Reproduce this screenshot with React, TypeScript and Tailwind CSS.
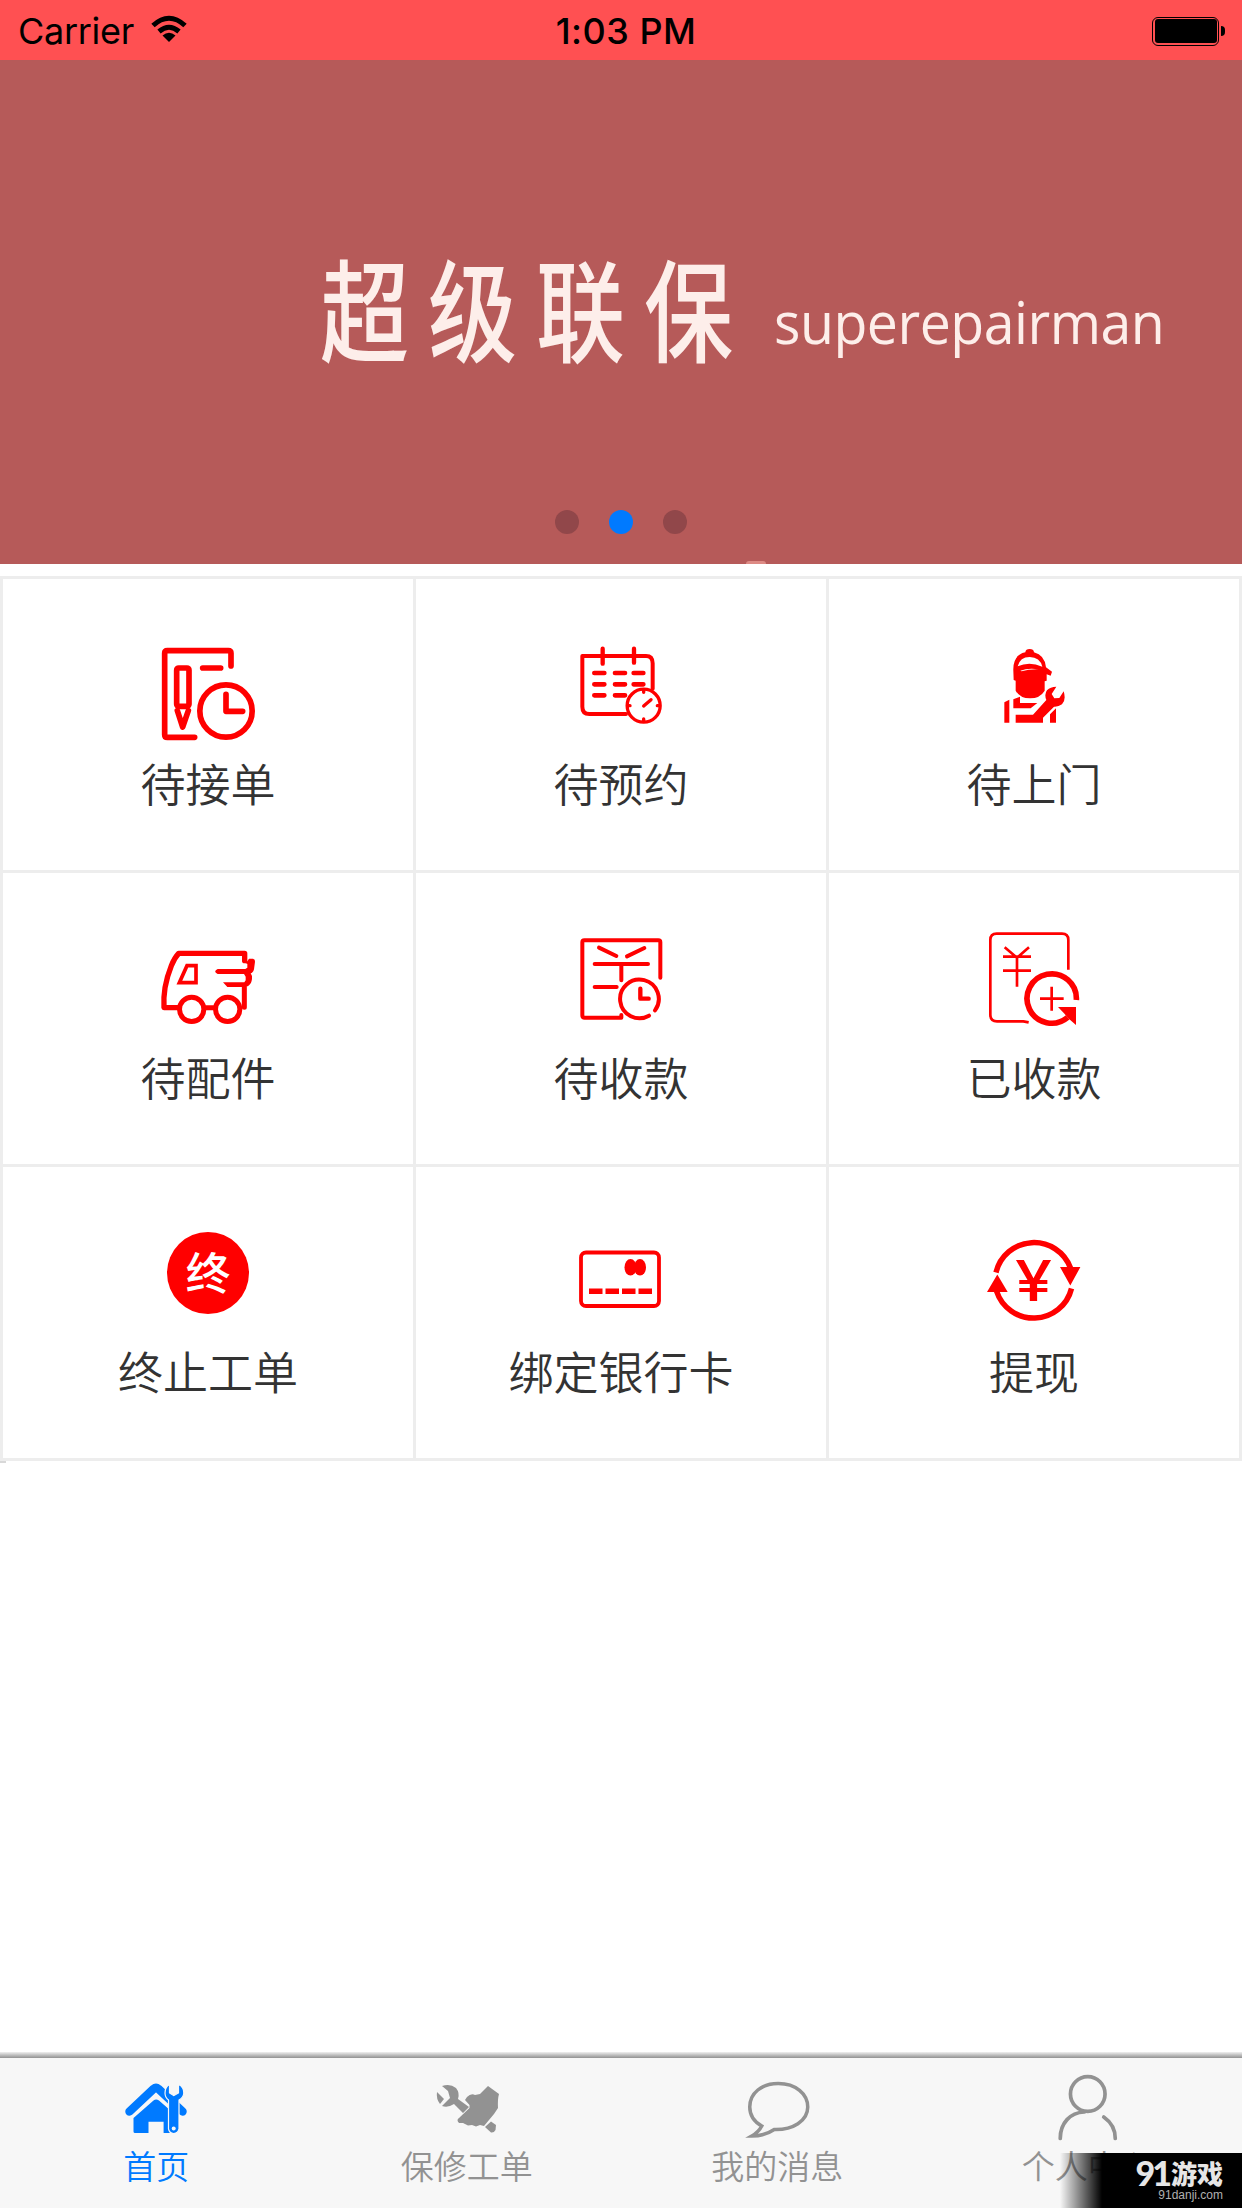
import type { ReactNode } from 'react'

const cjk = "font-['Noto_Sans_CJK_SC',sans-serif]"

function Icon({ box, children }: { box: string; children: ReactNode }) {
  return (
    <svg
      className="h-[130px] w-[160px]"
      viewBox={box}
      fill="none"
      stroke="#ff0000"
      strokeLinecap="round"
      strokeLinejoin="round"
    >
      {children}
    </svg>
  )
}

const OrderIcon = () => (
  <Icon box="-6 0 480 390">
    <g strokeWidth="17">
      <path d="M303 138V100q0-8-8-8H112q-8 0-8 8V344q0 8 8 8H194" />
      <rect x="140" y="144" width="37" height="115" rx="6" />
      <path d="M142 272L158 321L175 272M218 144H272" />
      <circle cx="288" cy="273" r="78.5" />
      <path d="M288 223V274H338" />
    </g>
  </Icon>
)

const BookingIcon = () => (
  <Icon box="-27 0 480 390">
    <g strokeWidth="12">
      <path d="M228 282H118Q97 282 97 260V108H288Q308 108 308 130V206" />
      <path d="M158 86V131M252 86V128" strokeWidth="13" />
      <path
        d="M133 159H163M195 159H225M251 159H280M133 193H163M195 193H225M251 193H280M133 226H163M195 226H225"
        strokeWidth="14"
      />
      <circle cx="281" cy="257" r="49.5" strokeWidth="10" />
      <path d="M281 258L303 239M281 212V217M281 297V302M236 257H240M322 257H326" strokeWidth="10" />
    </g>
  </Icon>
)

const WorkerIcon = () => (
  <Icon box="-18 0 480 390">
    <g fill="#ff0000" stroke="none">
      <path d="M160 152Q158 105 196 97Q197 87 209 87Q221 87 222 97Q254 105 258 142L276 155L272 167L260 163V182L254 184V212Q240 235 210 235Q180 235 167 212V182L161 180Z" />
      <path d="M133 247L148 239V308H133ZM160 238L180 230V249H232L212 265H160ZM167 284H219L259 240Q252 222 261 211Q271 200 289 200L275 222L283 235L298 234L311 214Q319 240 306 253Q295 261 282 260L249 293V308H167ZM270 283L288 265V308H270Z" />
      <path d="M173 139Q180 111 209 111Q240 112 247 140Q208 123 173 139ZM181 152Q205 143 236 148Q207 147 185 154Z" fill="#fff" />
    </g>
  </Icon>
)

const VanIcon = () => (
  <Icon box="-6 12 480 390">
    <path d="M143 293H102Q98 232 124 167Q133 144 146 130H344V152" strokeWidth="16" />
    <path d="M228 293H250M343 232V292" strokeWidth="15" />
    <path d="M171 167H198V218H148Z" strokeWidth="11" strokeLinejoin="miter" />
    <circle cx="185" cy="298" r="36.5" strokeWidth="15" />
    <circle cx="293" cy="298" r="36.5" strokeWidth="15" />
    <path
      d="M336 154H352L357 146H369Q376 148 375 155L372 178Q369 189 362 190L366 198Q367 214 360 223Q356 230 346 231H292L279 217H343L347 211V200L342 192H263Q248 184 263 177H346L352 173V162Z"
      fill="#ff0000"
      stroke="none"
    />
  </Icon>
)

const ReceivableIcon = () => (
  <Icon box="-27 12 480 390">
    <g strokeWidth="12">
      <path d="M331 203V97Q331 91 325 91H103Q97 91 97 97V316Q97 323 104 323H214V315" />
      <path d="M147 113L199 138M231 139L283 114M134 162H294M214 163V211M134 231H200" />
      <path d="M315 301A58 58 0 1 0 297 317" />
      <path d="M271 236V266H296" strokeWidth="13" />
    </g>
  </Icon>
)

const ReceivedIcon = () => (
  <Icon box="-18 12 480 390">
    <path
      d="M325 179V90Q325 71 306 71H110Q91 71 91 90V314Q91 334 111 334H190L206 337"
      strokeWidth="8"
      strokeLinecap="butt"
    />
    <path
      d="M134 112L171 143L207 112M129 140H213M129 182H213M171 142V230M275 230V302M240 266H311"
      strokeWidth="8"
      strokeLinecap="butt"
      strokeLinejoin="miter"
    />
    <path d="M349 270A74 74 0 1 0 323 322" strokeWidth="17" strokeLinecap="butt" />
    <path d="M294 291H348V345L328 328L312 310Z" fill="#ff0000" stroke="none" />
  </Icon>
)

const StopIcon = () => (
  <Icon box="54 -6 480 390">
    <circle cx="294" cy="189" r="123" fill="#ff0000" stroke="none" />
    <text
      x="294"
      y="240"
      fontSize="134"
      textAnchor="middle"
      fill="#fff"
      stroke="none"
      className={`${cjk} font-medium`}
    >
      终
    </text>
  </Icon>
)

const CardIcon = () => (
  <Icon box="541 1208 160 130">
    <rect x="581" y="1252.5" width="78" height="53.5" rx="5" strokeWidth="3.8" />
    <g fill="#ff0000" stroke="none">
      <ellipse cx="630.5" cy="1267.3" rx="6" ry="8.3" />
      <ellipse cx="640" cy="1267.3" rx="6" ry="8.3" />
      <path d="M589 1288.5h13.5v5.5H589zM605.5 1288.5h13.5v5.5h-13.5zM622 1288.5h13.5v5.5H622zM638.5 1288.5h13.5v5.5h-13.5z" />
    </g>
  </Icon>
)

const WithdrawIcon = () => (
  <Icon box="954 1208 160 130">
    <path
      d="M996 1272.5A39 39 0 0 1 1070.5 1268M1071.5 1288.5A39 39 0 0 1 996.5 1291"
      strokeWidth="5.5"
      strokeLinecap="butt"
    />
    <path d="M1060 1267H1080.4L1070.3 1285.5ZM987 1292H1007.7L997.3 1274.5Z" fill="#ff0000" stroke="none" />
    <text
      x="1033.5"
      y="1301"
      fontSize="56"
      textAnchor="middle"
      textLength="37"
      lengthAdjust="spacingAndGlyphs"
      fill="#ff0000"
      stroke="none"
      className="font-['Inter',sans-serif] font-medium"
    >
      ¥
    </text>
  </Icon>
)

const entries = [
  { label: '待接单', icon: <OrderIcon /> },
  { label: '待预约', icon: <BookingIcon /> },
  { label: '待上门', icon: <WorkerIcon /> },
  { label: '待配件', icon: <VanIcon /> },
  { label: '待收款', icon: <ReceivableIcon /> },
  { label: '已收款', icon: <ReceivedIcon /> },
  { label: '终止工单', icon: <StopIcon /> },
  { label: '绑定银行卡', icon: <CardIcon /> },
  { label: '提现', icon: <WithdrawIcon /> },
]

const tabs = [
  {
    label: '首页',
    active: true,
    icon: (
      <svg className="h-[72px] w-[70px]" viewBox="-5 -10 70 72" fill="#007aff">
        <path
          d="M4.5 31.5L28.5 9Q31 7 33.5 9L57.5 31.5"
          fill="none"
          stroke="#007aff"
          strokeWidth="8.5"
          strokeLinecap="round"
        />
        <path d="M8.5 38L28.5 20.5Q31 18.5 34 20.5L46 31V53H38.6V41.7H23.5V53H10Q8.5 53 8.5 51.5Z" />
        <path
          d="M44.5 4.5V13L48.8 15.5L53.5 13V4.5Q59 7 58.8 13Q58.5 17.5 54 20V49Q53 53.5 48.7 53.5Q44.5 53.5 43.5 49V20Q40 17.5 40 13Q40 7 44.5 4.5Z"
          stroke="#f7f7f7"
          strokeWidth="1.2"
        />
        <circle cx="48.7" cy="48.5" r="2" fill="#f7f7f7" />
      </svg>
    ),
  },
  {
    label: '保修工单',
    active: false,
    icon: (
      <svg className="h-[72px] w-[70px]" viewBox="431 2070 70 72" fill="#929292">
        <path d="M442 2086Q450 2083 456 2088Q460 2093 458 2099L469 2107L463 2113L454 2104Q448 2108 442 2106L450 2098L448 2091Z" />
        <path d="M437 2092L444 2099L440 2104Q436 2099 437 2092Z" />
        <path d="M488 2086L499 2094Q497.5 2099 498 2108L494 2114L484 2126L480 2125L476 2126.5L472 2125L468 2125.5L463 2123H459Q456 2120 459 2118L469.5 2108V2105L465 2100L467 2097Q471 2093 475 2095L480 2094Z" />
        <path d="M491 2121.5L496 2125L495.5 2130Q494 2133 491 2132.5L485 2127Z" />
      </svg>
    ),
  },
  {
    label: '我的消息',
    active: false,
    icon: (
      <svg
        className="h-[72px] w-[70px]"
        viewBox="741.25 2070 70 72"
        fill="none"
        stroke="#929292"
        strokeWidth="3.5"
      >
        <path d="M762 2126C753 2121 750 2114 750 2107C750 2093 762 2083.5 778.5 2083.5C796 2083.5 808 2094 808 2107C808 2121 793 2130 774.5 2129.5Q765 2136 752 2136Q759 2132 762 2126Z" />
      </svg>
    ),
  },
  {
    label: '个人中心',
    active: false,
    icon: (
      <svg
        className="h-[72px] w-[70px]"
        viewBox="1051.75 2070 70 72"
        fill="none"
        stroke="#929292"
        strokeWidth="3.7"
        strokeLinecap="round"
      >
        <circle cx="1087.5" cy="2094" r="17.3" />
        <path d="M1060 2138.5C1060 2123 1070 2112.5 1084 2112M1103.5 2117Q1115 2125 1115 2138.5" />
      </svg>
    ),
  },
]

function StatusBar() {
  return (
    <div className="grid h-[60px] grid-cols-3 items-center bg-[#ff5052] pt-[3px] pr-[17px] pb-px pl-[18px] font-['Inter',sans-serif] text-[36px] leading-none text-black">
      <div className="flex items-center gap-4">
        <span className="tracking-[-0.3px]">Carrier</span>
        <svg className="h-7 w-[38px] -translate-y-0.5" viewBox="0 0 38 28">
          <path d="M3 10.5Q19-4 35 10.5" fill="none" stroke="#000" strokeWidth="5" />
          <path d="M9 16.5Q19 8 29 16.5" fill="none" stroke="#000" strokeWidth="5" />
          <path d="M12.5 20.5Q19 15 25.5 20.5L19 27Z" />
        </svg>
      </div>
      <div className="pl-[9px] text-center font-medium tracking-[0.5px]">1:03 PM</div>
      <div className="flex items-center justify-end gap-0.5">
        <div className="h-[29px] w-[67px] rounded-[6px] border-[1.5px] border-black p-[1.5px]">
          <div className="h-full w-full rounded-[3px] bg-black" />
        </div>
        <div className="h-2.5 w-1 rounded-r-full bg-black" />
      </div>
    </div>
  )
}

function Banner() {
  return (
    <div className="relative h-[504px] overflow-hidden bg-[#b65a59]">
      <div className="flex items-start pt-[178px] pl-[320px] text-[#fdeeea]">
        <div
          className={`${cjk} w-[454px] scale-y-125 text-[89px] leading-[136px] font-medium tracking-[19px] whitespace-nowrap`}
        >
          超级联保
        </div>
        <div className="origin-left scale-x-[0.99] scale-y-105 pt-[52px] font-['Open_Sans',sans-serif] text-[56px] leading-[60px] font-medium tracking-[-0.5px] whitespace-nowrap">
          superepairman
        </div>
      </div>
      <div className="absolute bottom-[30px] left-1/2 flex -translate-x-1/2 gap-[30px]">
        <span className="size-6 rounded-full bg-[#91474a]" />
        <span className="size-6 rounded-full bg-[#007aff]" />
        <span className="size-6 rounded-full bg-[#91474a]" />
      </div>
      <div className="absolute bottom-0 left-[746px] h-[3px] w-5 rounded-t bg-[#dd8a84]" />
    </div>
  )
}

function Watermark() {
  return (
    <div className="absolute right-0 bottom-0 flex h-[55px] w-[182px] flex-col items-end bg-linear-to-r from-transparent to-black to-[42px] pt-[5px] pr-[19px] text-[#e6e6e6]">
      <div className="flex h-[30px] items-center gap-0.5">
        <span className="font-['Lato',sans-serif] text-[34px] leading-none font-black tracking-[-3px]">91</span>
        <span className={`${cjk} text-[26px] leading-none font-black`}>游戏</span>
      </div>
      <span className="font-['Liberation_Sans',sans-serif] text-[12px] leading-[14px] text-[#b0b0b0]">
        91danji.com
      </span>
    </div>
  )
}

export default function App() {
  return (
    <div className="relative flex h-[2208px] w-[1242px] flex-col overflow-hidden bg-white">
      <StatusBar />
      <Banner />
      <div className="mt-3 grid grid-cols-3 gap-[3px] bg-[#ededed] p-[3px]">
        {entries.map((entry) => (
          <div key={entry.label} className="flex h-[291px] flex-col items-center bg-white pt-[41px]">
            {entry.icon}
            <div className={`${cjk} mt-[3px] text-[45px] leading-[60px] font-[350] text-[#333]`}>{entry.label}</div>
          </div>
        ))}
      </div>
      <div className="h-0.5 w-1.5 bg-[#d8d8d8]" />
      <div className="flex-1" />
      <div className="h-1.5 bg-linear-to-b from-[#f0f0f0] to-[#929292]" />
      <div className="grid h-[150px] grid-cols-4 bg-[#f7f7f7]">
        {tabs.map((tab) => (
          <div key={tab.label} className="flex flex-col items-center pt-3">
            {tab.icon}
            <div
              className={`${cjk} mt-[3px] pl-0.5 text-[33px] leading-10 font-[350] ${tab.active ? 'text-[#007aff]' : 'text-[#929292]'}`}
            >
              {tab.label}
            </div>
          </div>
        ))}
      </div>
      <Watermark />
    </div>
  )
}
